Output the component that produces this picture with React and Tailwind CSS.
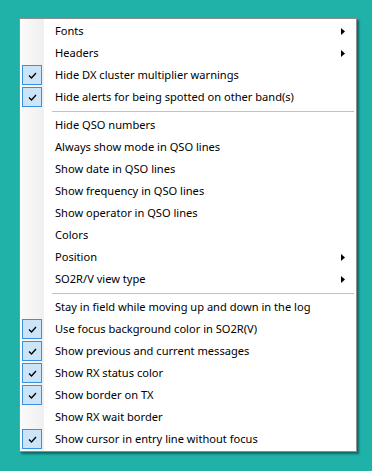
import React from 'react'

const groups = [
  [
    { label: 'Fonts', sub: true },
    { label: 'Headers', sub: true },
    { label: 'Hide DX cluster multiplier warnings', checked: true },
    { label: 'Hide alerts for being spotted on other band(s)', checked: true },
  ],
  [
    { label: 'Hide QSO numbers' },
    { label: 'Always show mode in QSO lines' },
    { label: 'Show date in QSO lines' },
    { label: 'Show frequency in QSO lines' },
    { label: 'Show operator in QSO lines' },
    { label: 'Colors' },
    { label: 'Position', sub: true },
    { label: 'SO2R/V view type', sub: true },
  ],
  [
    { label: 'Stay in field while moving up and down in the log' },
    { label: 'Use focus background color in SO2R(V)', checked: true },
    { label: 'Show previous and current messages', checked: true },
    { label: 'Show RX status color', checked: true },
    { label: 'Show border on TX', checked: true },
    { label: 'Show RX wait border' },
    { label: 'Show cursor in entry line without focus', checked: true },
  ],
]

const Check = () => (
  <div className="w-[20px] h-[20px] border border-[#3a8fde] bg-[#cce4f7] flex items-center justify-center">
    <svg width="9" height="7" viewBox="0 0 9 7">
      <path d="M1 3.5 L3.5 6 L8 1" fill="none" stroke="#000" strokeWidth="1.3" />
    </svg>
  </div>
)

const Arrow = () => (
  <svg width="4" height="7" viewBox="0 0 4 7" className="mr-[11px]">
    <path d="M0 0 L4 3.5 L0 7 Z" fill="#000" />
  </svg>
)

const Row = ({ item }) => (
  <div className="flex items-center h-[22px]">
    <div className="w-[24px] flex justify-center">{item.checked && <Check />}</div>
    <span className="flex-1 pl-[11px] text-[11.1px] text-black">{item.label}</span>
    {item.sub && <Arrow />}
  </div>
)

const App = () => {
  return (
    <div className="w-[372px] h-[471px] bg-[#20b1a9] pt-[18px] pl-[19px]" style={{ fontFamily: '"Noto Sans", "Open Sans", sans-serif' }}>
      <div className="w-[338px] border border-[#8f8f8f] py-[1px] bg-[linear-gradient(to_right,#fbfbfb_0px,#efefef_24px,#ffffff_24px)] shadow-[2px_2px_2px_rgba(0,40,40,0.55)]">
        {groups.map((g, i) => (
          <div key={i}>
            {i > 0 && (
              <div className="h-[6px] flex items-center pl-[32px] pr-[2px]">
                <div className="h-px w-full bg-[#c2c2c2]" />
              </div>
            )}
            {g.map((item) => (
              <Row key={item.label} item={item} />
            ))}
          </div>
        ))}
      </div>
    </div>
  )
}

export default App
